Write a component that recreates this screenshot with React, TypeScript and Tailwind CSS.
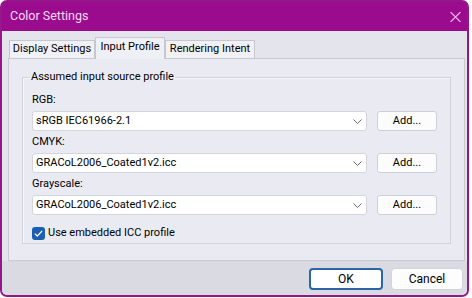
export default function App() {
  const rows = [
    { label: "RGB:", value: "sRGB IEC61966-2.1" },
    { label: "CMYK:", value: "GRACoL2006_Coated1v2.icc" },
    { label: "Grayscale:", value: "GRACoL2006_Coated1v2.icc" },
  ];

  return (
    <div
      className="w-[472px] h-[298px] bg-white text-[11px] text-black"
      style={{ fontFamily: "Roboto, 'Liberation Sans', sans-serif" }}
    >
      <div className="w-[469px] h-[297px] rounded-[7px] border-2 border-[#941789] bg-[#9b0b8e] flex flex-col overflow-hidden">
        {/* title bar */}
        <div className="h-[29px] shrink-0 flex items-center justify-between pl-[8px] pr-[6px]">
          <span className="text-[12.5px] text-[#f7dbf3]">Color Settings</span>
          <svg width="11" height="10" viewBox="0 0 11 10" className="mt-[1px]">
            <path d="M0.5 0 L10.5 10 M10.5 0 L0.5 10" stroke="#f0b6ea" strokeWidth="1.1" fill="none" />
          </svg>
        </div>

        <div className="flex-1 flex flex-col bg-[#e3e4ec]">
          <div className="pl-[6px] pt-[6px]">
            {/* tabs */}
            <div className="relative z-10 flex items-end h-[22px] pl-[1px]">
              <div className="w-[86px] h-[19px] flex items-center justify-center border border-[#c6c7cf] bg-[#f1f1f5]">
                Display Settings
              </div>
              <div className="w-[70px] h-[22px] flex items-center justify-center border-x border-t border-[#c6c7cf] bg-[#eff0f5] pb-[2px]">
                Input Profile
              </div>
              <div className="w-[90px] h-[19px] flex items-center justify-center border border-[#c6c7cf] bg-[#f1f1f5]">
                Rendering Intent
              </div>
            </div>

            {/* tab page */}
            <div className="-mt-px w-[457px] h-[203px] border border-[#c9cad2] bg-[#eaebf2] px-[13px] pt-[11px]">
              <fieldset className="h-[174px] border border-[#d1d2da] pl-[9px] pr-[13px] pt-[5px] shadow-[inset_1px_1px_0_#f7f7fb]">
                <legend className="-ml-[2px] px-[1px] leading-[14px]">Assumed input source profile</legend>
                {rows.map((r) => (
                  <div key={r.label}>
                    <div className="h-[22px] flex items-center">{r.label}</div>
                    <div className="flex gap-[10px]">
                      <div className="flex-1 h-[20px] flex items-center justify-between bg-white border border-[#d4d5dd] rounded-[3px] pl-[3px] pr-[4px]">
                        <span>{r.value}</span>
                        <svg width="9" height="5" viewBox="0 0 9 5">
                          <path d="M0.5 0.5 L4.5 4.5 L8.5 0.5" stroke="#6b6b72" strokeWidth="1" fill="none" />
                        </svg>
                      </div>
                      <div className="w-[60px] h-[20px] flex items-center justify-center bg-[#fcfcfd] border border-[#cfd0d7] rounded-[3px]">
                        Add...
                      </div>
                    </div>
                  </div>
                ))}
                <div className="mt-[12px] flex items-center gap-[3px] h-[13px]">
                  <div className="w-[13px] h-[13px] rounded-[3px] bg-[#1c5fb1] flex items-center justify-center">
                    <svg width="9" height="7" viewBox="0 0 9 7">
                      <path d="M0.8 3.6 L3.3 6 L8.2 0.9" stroke="white" strokeWidth="1.3" fill="none" />
                    </svg>
                  </div>
                  <span>Use embedded ICC profile</span>
                </div>
              </fieldset>
            </div>
          </div>

          {/* footer */}
          <div className="flex-1 bg-[#d9dae2] flex justify-end items-start gap-[8px] pr-[4px] pt-[7px]">
            <div className="w-[74px] h-[22px] flex items-center justify-center bg-white border-2 border-[#2c64a6] rounded-[4px] text-[12px]">
              OK
            </div>
            <div className="w-[72px] h-[22px] flex items-center justify-center bg-[#fdfdfd] border border-[#d3d4db] rounded-[4px] text-[12px]">
              Cancel
            </div>
          </div>
        </div>
      </div>
    </div>
  );
}
